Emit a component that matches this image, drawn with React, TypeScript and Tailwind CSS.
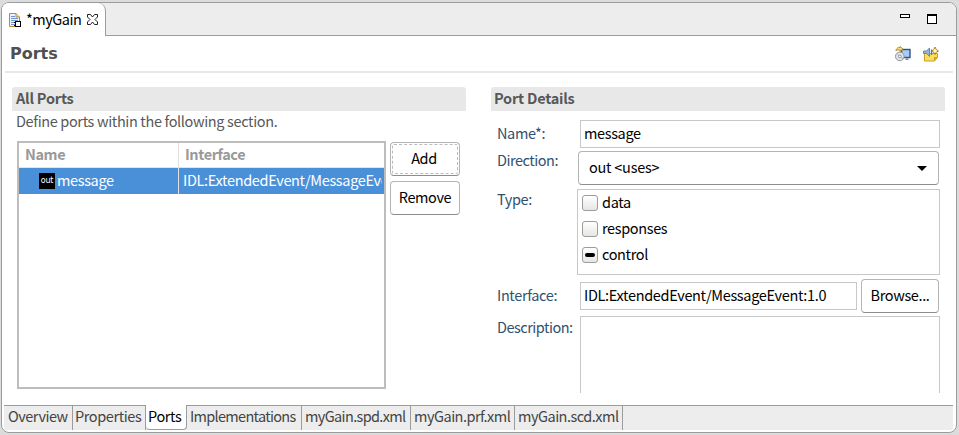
import type { ReactNode } from 'react';

const button =
  'flex h-[34px] items-center justify-center rounded-[4px] border border-[#b4b4b2] border-b-[#8e8e88] bg-white pb-0.5 text-black';

function Section({ title, indent, children }: { title: string; indent: string; children: ReactNode }) {
  return (
    <section className="w-[454px] shrink-0">
      <h2 className={`h-6 rounded-t-[3px] bg-[#e8e8e8] text-[14.5px] leading-[21px] font-bold tracking-[-0.22px] text-[#585858] ${indent}`}>
        {title}
      </h2>
      {children}
    </section>
  );
}

function Label({ className = '', children }: { className?: string; children: ReactNode }) {
  return <label className={`shrink-0 text-[#32506f] ${className}`}>{children}</label>;
}

function Check({ label, mixed = false }: { label: string; mixed?: boolean }) {
  return (
    <div className="flex h-[26px] items-center gap-1 text-black">
      <span className="flex h-4 w-4 items-center justify-center rounded-[3px] border border-[#9c9c98] bg-linear-to-b from-white to-[#e6e6e4]">
        {mixed && <span className="h-1 w-2.5 rounded-full bg-black" />}
      </span>
      <span className="pb-0.5">{label}</span>
    </div>
  );
}

function FileIcon() {
  return (
    <svg width="14" height="16" viewBox="0 0 14 16" className="shrink-0">
      <path d="M.5 1.500h6.500l3.500 3.500v9.500h-10z" fill="#eef3fb" stroke="#b08d3c" />
      <path d="M7 1.500v3.500h3.500" fill="#f3dfa0" stroke="#b08d3c" />
      <path d="M2 4.500h4M2 6.500h7M2 8.500h7M2 10.500h4M2 12.500h4" stroke="#6f94cf" />
      <rect x="6.500" y="9.500" width="5" height="5" fill="#fff" stroke="#000" />
      <path d="M5 10.500h2M5 13.500h2" stroke="#000" />
    </svg>
  );
}

function CloseIcon() {
  return (
    <svg width="11" height="11" viewBox="0 0 11 11" className="shrink-0">
      <path d="M.5 .5h3l2 2.500 2-2.500h3v2.500L8 5.500l2.500 2.500v2.500h-3L5.500 8 3.500 10.500h-3V8L3 5.500.5 3z" fill="#fff" stroke="#222" />
    </svg>
  );
}

function DeployIcon() {
  return (
    <svg width="16" height="16" viewBox="0 0 16 16">
      <rect x="6.500" y="3.500" width="8.500" height="8" fill="#a9cdf0" stroke="#2f5288" strokeWidth="1.400" />
      <path d="M10.500 12.500h3v1.500h-3z" fill="#6d87ab" />
      <circle cx="4.800" cy="10.400" r="4.300" fill="#e3e6ee" stroke="#8d929c" />
      <path d="M2.300 8.500l1.500 1M6 11.500l2 1" stroke="#a5bd9d" />
      <circle cx="4.800" cy="10.400" r="1.400" fill="#fff" stroke="#858d9f" />
      <path d="M.8 4.500C1.500 2 3.500 1.200 5 1.500V.5L8 3 5 5.500V4C3.500 3.500 2.500 4 .8 4.500z" fill="#f8dd78" stroke="#a77b10" strokeWidth=".8" />
    </svg>
  );
}

function AnnounceIcon() {
  return (
    <svg width="16" height="16" viewBox="0 0 16 16">
      <path d="M1.500 7.500h13v4l-3 3.500h-10z" fill="#fbe05e" stroke="#c99f28" />
      <path d="M11.500 15v-3.500h3" fill="#d9a92c" stroke="#c99f28" />
      <path d="M.5 5h3l3-3v8.500l-3-3h-3z" fill="#91b5dd" stroke="#6288b8" />
      <path d="M8.500 3.500v5.500" stroke="#4f78b0" strokeWidth="1.300" />
      <path d="M12 1l1.200 2.500L15.500 5l-2.300 1.200L12 8.700l-1.200-2.500L8.800 5l2-1.500z" fill="#fff6cf" stroke="#b0841c" />
    </svg>
  );
}

const pages = [
  { name: 'Overview', cell: 'w-[69px] pl-1 tracking-[-0.48px]' },
  { name: 'Properties', cell: 'w-[73px] pl-0.5 tracking-[-0.4px]' },
  { name: 'Ports', cell: 'w-[41px] pl-0.5 tracking-[-0.36px]' },
  { name: 'Implementations', cell: 'w-[115px] pl-[3px] tracking-[-0.7px]' },
  { name: 'myGain.spd.xml', cell: 'w-[109px] pl-[3px] tracking-[-0.64px]' },
  { name: 'myGain.prf.xml', cell: 'w-[104px] pl-[3px] tracking-[-0.5px]' },
  { name: 'myGain.scd.xml', cell: 'w-[108px] pl-[3px] tracking-[-0.5px]' },
];

export default function App() {
  return (
    <div className="h-[435px] w-[959px] overflow-hidden bg-[#dcdcdc] pt-0.5 pl-px font-['Noto_Sans_CJK_SC',sans-serif] text-[14.5px] leading-5 tracking-[-0.36px] whitespace-nowrap">
      <div className="flex h-[431px] w-[956px] flex-col overflow-hidden rounded-[8px] border border-[#9c9c9c] bg-white">
        <header className="flex h-[33px] shrink-0 bg-[#ededed]">
          <div className="flex w-[104px] shrink-0 items-center rounded-tr-[8px] border-r border-[#9c9c9c] bg-white pl-[7px] text-black">
            <FileIcon />
            <span className="ml-[3px] w-[61px] pb-0.5 tracking-[-0.5px]">*myGain</span>
            <CloseIcon />
          </div>
          <div className="flex grow items-start justify-end border-b border-[#9c9c9c] pr-[19px]">
            <span className="mt-[11px] h-1 w-2.5 border border-black bg-white" />
            <span className="mt-[11px] ml-[17px] h-2.5 w-2.5 border border-t-2 border-black bg-white" />
          </div>
        </header>

        <div className="mx-[3px] flex h-[37px] shrink-0 items-center border-b-2 border-[#e8e8e8] pl-[5px]">
          <h1 className="grow font-['DejaVu_Sans',sans-serif] text-base font-bold tracking-normal text-[#505050]">Ports</h1>
          <div className="mr-3.5 flex gap-3">
            <DeployIcon />
            <AnnounceIcon />
          </div>
        </div>

        <main className="flex h-[332px] shrink-0 gap-[25px] overflow-hidden pt-[14px] pl-2.5">
          <Section title="All Ports" indent="pl-1">
            <p className="h-[30px] pl-1 leading-[19px] text-[#585858]">Define ports within the following section.</p>
            <div className="flex gap-1 pl-[5px]">
              <div className="h-[248px] w-[369px] overflow-hidden border-2 border-[#bdbdbb] bg-white">
                <div className="flex h-[25px] border-b border-[#e4e4e4] leading-[22px] font-bold tracking-[-0.42px] text-[#999]">
                  <span className="w-[160px] border-r border-[#e0e0e0] pl-1.5">Name</span>
                  <span className="pl-1.5">Interface</span>
                </div>
                <div className="flex h-[26px] bg-[#4a90d9] leading-6 text-white">
                  <span className="flex w-[160px] shrink-0 border-r border-[#e0e0e0] pl-5">
                    <span className="mt-[5px] mr-0.5 flex h-4 w-4 justify-center bg-black font-['DejaVu_Sans',sans-serif] text-[8px] leading-4 tracking-[-0.2px]">
                      out
                    </span>
                    message
                  </span>
                  <span className="mr-0.5 overflow-hidden pl-1 tracking-[-0.33px]">IDL:ExtendedEvent/MessageEvent:1.0</span>
                </div>
              </div>
              <div className="flex w-[70px] flex-col gap-[5px] pt-px">
                <button className="h-[34px] rounded-[4px] border border-[#b4b4b2] border-b-[#8e8e88] bg-white p-px text-black">
                  <span className="flex h-full w-full items-center justify-center rounded-[2px] border border-dashed border-[#bbb] pr-0.5 pb-0.5">
                    Add
                  </span>
                </button>
                <button className={button}>Remove</button>
              </div>
            </div>
          </Section>

          <Section title="Port Details" indent="pl-[3px]">
            <div className="flex flex-col pl-1.5">
              <div className="mt-[9px] flex h-7">
                <Label className="w-[83px] pt-[3px]">Name*:</Label>
                <span className="w-[360px] border border-[#c8c8c8] pl-[3px] leading-6 text-black">message</span>
              </div>
              <div className="mt-[3px] flex h-[34px]">
                <Label className="-mt-px w-[81px] tracking-[-0.48px]">Direction:</Label>
                <span className="flex w-[361px] items-center justify-between rounded-[4px] border border-[#b4b4b2] border-b-[#8e8e88] pr-[11px] pl-2.5 text-black">
                  <span className="pb-0.5 tracking-[-0.25px]">out &lt;uses&gt;</span>
                  <svg width="10" height="5" viewBox="0 0 10 5">
                    <path d="M0 0h10L5 5z" />
                  </svg>
                </span>
              </div>
              <div className="mt-1 flex h-[86px]">
                <Label className="w-[80px]">Type:</Label>
                <div className="w-[363px] border border-[#c8c8c8] pl-1">
                  <Check label="data" />
                  <Check label="responses" />
                  <Check label="control" mixed />
                </div>
              </div>
              <div className="mt-1 flex h-[34px] items-center">
                <Label className="w-[83px] pb-0.5">Interface:</Label>
                <span className="h-7 w-[277px] border border-[#c8c8c8] pl-[3px] leading-6 tracking-[-0.33px] text-black">
                  IDL:ExtendedEvent/MessageEvent:1.0
                </span>
                <button className={`${button} ml-1 w-[78px]`}>Browse...</button>
              </div>
              <div className="mt-[3px] flex h-[77px]">
                <Label className="w-[83px] pt-px tracking-[-0.5px]">Description:</Label>
                <span className="w-[360px] border border-b-0 border-[#c8c8c8]" />
              </div>
            </div>
          </Section>
        </main>

        <nav className="mr-[3px] ml-0.5 flex h-[25px] shrink-0 border-t border-[#9c9c9c] bg-[#ededed] leading-5 text-[#444]">
          {pages.map(({ name, cell }) => (
            <span
              key={name}
              className={`shrink-0 border-r border-[#9c9c9c] ${cell} ${name === 'Ports' ? '-mt-px rounded-b-[4px] border-b bg-white pt-px text-black' : ''}`}
            >
              {name}
            </span>
          ))}
        </nav>
      </div>
    </div>
  );
}
